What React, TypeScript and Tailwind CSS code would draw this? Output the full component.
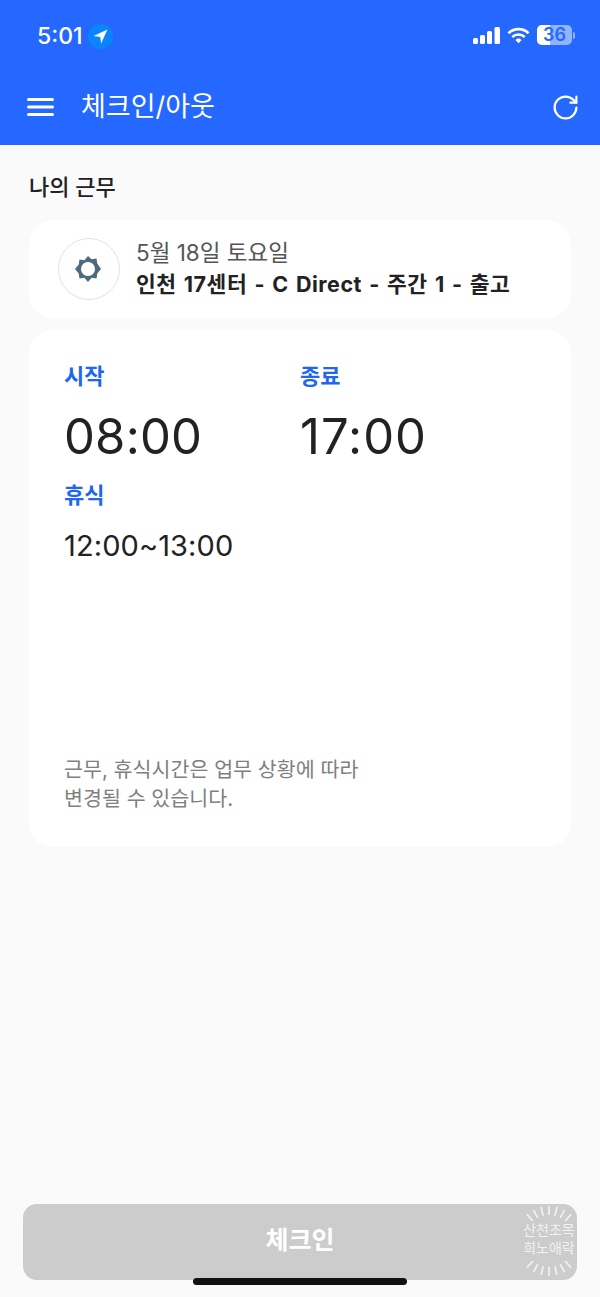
import { RotateCw } from 'lucide-react';

const krFont = { fontFamily: 'Inter, "Noto Sans CJK KR", sans-serif' };

function StatusBar() {
  return (
    <div className="flex h-[70px] items-start justify-between pl-[37px] pr-[25px] pt-[22px]">
      <div className="flex items-center gap-[5px]">
        <span className="text-[23px] leading-[28px] font-medium text-white">5:01</span>
        <span className="flex h-[25px] w-[25px] items-center justify-center rounded-full bg-[#0a84ff]">
          <svg viewBox="0 0 16 16" className="h-[17px] w-[17px]" fill="white">
            <path d="M14.5 1.5 1.5 7.5l6.2.9.9 6.2z" />
          </svg>
        </span>
      </div>
      <div className="flex items-center gap-[7px] pt-[3px]">
        <svg viewBox="0 0 27 17" className="h-[17px] w-[27px]" fill="white">
          <rect x="0" y="11" width="5" height="6" rx="1.5" />
          <rect x="7" y="8" width="5" height="9" rx="1.5" />
          <rect x="14" y="4" width="5" height="13" rx="1.5" />
          <rect x="21.5" y="0" width="5.5" height="17" rx="1.5" />
        </svg>
        <svg viewBox="0 0 24 17" className="h-[17px] w-[23px]" fill="none" stroke="white" strokeWidth="2.8">
          <path d="M1.5 6.2a15 15 0 0 1 21 0" />
          <path d="M5.5 10a9.5 9.5 0 0 1 13 0" />
          <path d="M12 16.5 8.8 13.2a4.6 4.6 0 0 1 6.4 0z" fill="white" stroke="none" />
        </svg>
        <div className="flex items-center gap-[1px]">
          <div className="relative h-[20px] w-[35px] overflow-hidden rounded-[5px] bg-white/50">
            <div className="h-full w-[13px] bg-white" />
            <span className="absolute inset-0 flex items-center justify-center text-[18px] leading-none font-semibold text-[#2468ff]">
              36
            </span>
          </div>
          <div className="h-[7px] w-[2px] rounded-r-[2px] bg-white/50" />
        </div>
      </div>
    </div>
  );
}

// Sunburst strokes of the stamp in the button corner
function Rays({ className }: { className: string }) {
  const angles = [-42, -28, -14, 0, 14, 28, 42];
  return (
    <svg viewBox="0 0 56 16" className={`absolute left-0 h-[16px] w-[56px] ${className}`} stroke="white" strokeOpacity="0.7" strokeWidth="1.8">
      {angles.map((a) => (
        <line key={a} x1="28" y1="1" x2="28" y2="10" transform={`rotate(${a} 28 34)`} />
      ))}
    </svg>
  );
}

export default function App() {
  return (
    <div className="relative flex h-[1297px] w-[600px] flex-col overflow-hidden bg-[#fafafa]" style={{ fontFamily: 'Inter' }}>
      <header className="h-[145px] bg-[#2468ff]">
        <StatusBar />
        <div className="flex h-[75px] items-center justify-between pb-[1px] pl-[27px] pr-[20px]">
          <div className="flex items-center gap-[27px]">
            <svg viewBox="0 0 27 20" className="h-[20px] w-[27px]" stroke="white" strokeWidth="3" strokeLinecap="round">
              <line x1="1.5" y1="2.5" x2="25.5" y2="2.5" />
              <line x1="1.5" y1="10" x2="25.5" y2="10" />
              <line x1="1.5" y1="17.5" x2="25.5" y2="17.5" />
            </svg>
            <h1 className="text-[27px] leading-[36px] font-normal text-white" style={krFont}>
              체크인/아웃
            </h1>
          </div>
          <RotateCw className="h-[29px] w-[29px] text-white" strokeWidth={1.8} />
        </div>
      </header>

      <main className="flex flex-1 flex-col px-[29px] pt-[28px]" style={krFont}>
        <h2 className="text-[22px] leading-[28px] font-medium text-[#222222]">나의 근무</h2>

        <section className="mt-[19px] flex h-[98px] items-center gap-[16px] rounded-[24px] bg-white pl-[29px]">
          <div className="flex h-[62px] w-[62px] items-center justify-center rounded-full border border-[#e2e2e2]">
            <svg viewBox="0 0 28 28" className="h-[28px] w-[28px] -translate-x-[1px]">
              <path d="M14 1l3.6 3.3 4.9-.8.8 4.9L27 14l-3.7 4.6-.8 4.9-4.9-.8L14 27l-3.6-4.3-4.9.8-.8-4.9L1 14l3.7-4.6.8-4.9 4.9.8z" fill="#4f6b7b" />
              <circle cx="14" cy="14" r="7" fill="white" />
            </svg>
          </div>
          <div>
            <p className="text-[22.5px] leading-[30px] text-[#555555]">5월 18일 토요일</p>
            <p className="text-[21.5px] leading-[32px] font-bold tracking-[0.5px] [word-spacing:1.7px] text-[#222222]">
              인천 17센터 - C Direct - 주간 1 - 출고
            </p>
          </div>
        </section>

        <section className="mt-[12px] flex h-[517px] flex-col rounded-[24px] bg-white pl-[35px] pt-[31px]">
          <div className="flex">
            <div className="w-[236px]">
              <p className="text-[22px] leading-[30px] font-bold text-[#1f66f0]">시작</p>
              <p className="mt-[16px] text-[49px] leading-[60px] tracking-[0.2px] text-[#222222]">08:00</p>
            </div>
            <div>
              <p className="text-[22px] leading-[30px] font-bold text-[#1f66f0]">종료</p>
              <p className="mt-[16px] text-[49px] leading-[60px] tracking-[1px] text-[#222222]">17:00</p>
            </div>
          </div>
          <p className="mt-[13px] text-[22px] leading-[30px] font-bold text-[#1f66f0]">휴식</p>
          <p className="mt-[18px] text-[29px] leading-[36px] tracking-[0.1px] text-[#222222]">12:00~13:00</p>
          <p className="mt-[191px] text-[20.6px] leading-[29px] text-[#808080]">
            근무, 휴식시간은 업무 상황에 따라
            <br />
            변경될 수 있습니다.
          </p>
        </section>
      </main>

      <div className="relative mx-[23px] mb-[17px] flex h-[76px] items-center justify-center rounded-[14px] bg-[#cccccc] pb-[2px]" style={krFont}>
        <span className="text-[25px] font-bold text-white">체크인</span>
        <div className="absolute right-0 top-0 h-full w-[56px] overflow-hidden">
          <Rays className="top-[1px]" />
          <p className="mt-[17px] text-center text-[14px] leading-[18px] whitespace-nowrap text-white/75">
            산천초목
            <br />
            희노애락
          </p>
          <Rays className="bottom-[3px] rotate-180" />
        </div>
      </div>

      <div className="absolute bottom-[12px] left-[193px] h-[7px] w-[214px] rounded-full bg-[#111111]" />
    </div>
  );
}
